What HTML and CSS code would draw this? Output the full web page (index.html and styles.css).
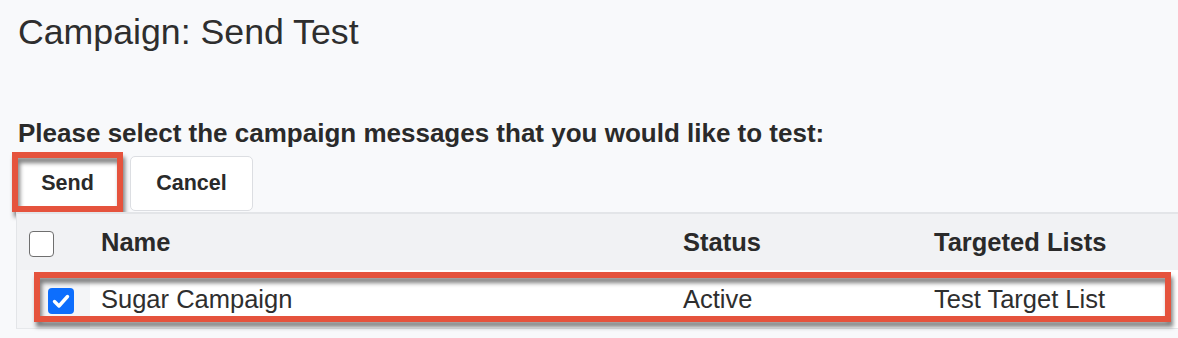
FILE: index.html
```html
<!DOCTYPE html>
<html>
<head>
<meta charset="utf-8">
<link rel="stylesheet" href="styles.css">
</head>
<body>
<div class="page">
  <h1 class="title">Campaign: Send Test</h1>
  <p class="prompt">Please select the campaign messages that you would like to test:</p>
  <div class="actions">
    <div class="hl-wrap">
      <button class="btn btn-send">Send</button>
      <span class="hl hl-send"></span>
    </div>
    <button class="btn btn-cancel">Cancel</button>
  </div>
  <div class="table">
    <div class="row head">
      <div class="cell cb-cell"><span class="cb"></span></div>
      <div class="cell c-name">Name</div>
      <div class="cell c-status">Status</div>
      <div class="cell c-lists">Targeted Lists</div>
    </div>
    <div class="row body">
      <div class="cell cb-cell cb-body"><span class="cb checked"><svg viewBox="0 0 26 26" width="26" height="26"><path d="M6.5 13.5 L11 18 L19.5 8.5" fill="none" stroke="#fff" stroke-width="3.4" stroke-linecap="round" stroke-linejoin="round"/></svg></span></div>
      <div class="cell c-name">Sugar Campaign</div>
      <div class="cell c-status">Active</div>
      <div class="cell c-lists">Test Target List</div>
    </div>
    <span class="hl hl-row"></span>
  </div>
</div>
</body>
</html>
```

FILE: styles.css
```css
html, body {
  margin: 0;
  padding: 0;
  background: #f8f9fb;
}
body {
  font-family: "Liberation Sans", Arial, sans-serif;
  color: #2c2c2c;
  width: 1178px;
  height: 338px;
  overflow: hidden;
}
.page {
  padding: 12px 0 0 16px;
}
.title {
  margin: 0 0 0 2px;
  font-size: 35.7px;
  line-height: 40px;
  font-weight: normal;
  color: #2e2e2e;
}
.prompt {
  margin: 66px 0 0 2px;
  font-size: 26px;
  line-height: 30px;
  font-weight: bold;
  color: #2a2a2a;
}
.actions {
  display: flex;
  gap: 11px;
  margin-top: 8px;
  height: 55px;
}
.hl-wrap {
  position: relative;
}
.btn {
  height: 55px;
  background: #fff;
  border: 1px solid #dcdee2;
  border-radius: 5px;
  font-family: "Liberation Sans", Arial, sans-serif;
  font-weight: bold;
  font-size: 21.5px;
  color: #2a2a2a;
  padding: 0;
}
.btn-send {
  width: 103px;
}
.btn-cancel {
  width: 123px;
}
.hl {
  position: absolute;
  border: 6px solid #e5533d;
  filter: drop-shadow(2px 5px 2px rgba(0, 0, 0, 0.5));
  pointer-events: none;
}
.hl-send {
  top: -4px;
  left: -4px;
  right: -4px;
  bottom: -1px;
}
.table {
  position: relative;
  margin-top: 1px;
  border-left: 1px solid #e3e5e8;
  border-top: 2px solid #e3e5e8;
  border-bottom: 1px solid #e6e8eb;
}
.row {
  display: grid;
  grid-template-columns: 73px 593px 251px 1fr;
  align-items: stretch;
}
.head {
  height: 56px;
  background: #f1f2f4;
  font-weight: bold;
  font-size: 25.5px;
  color: #2a2a2a;
}
.body {
  height: 58px;
  background: #fff;
  font-size: 25.5px;
  color: #2e2e2e;
}
.cell {
  display: flex;
  align-items: center;
  white-space: nowrap;
}
.c-name {
  padding-left: 11px;
}
.cb-cell {
  padding-left: 12px;
}
.cb-body {
  padding-left: 31px;
  background: #f4f5f7;
}
.cb {
  display: block;
  width: 25px;
  height: 26px;
  box-sizing: border-box;
  border: 1.5px solid #6f6f6f;
  border-radius: 4px;
  background: #fff;
  margin-top: 4px;
}
.cb.checked {
  width: 26px;
  border: none;
  background: #0d6efd;
  margin-top: 4px;
}
.cb.checked svg {
  display: block;
}
.hl-row {
  top: 58px;
  left: 17px;
  width: 1137px;
  height: 50px;
  box-sizing: border-box;
}
```
